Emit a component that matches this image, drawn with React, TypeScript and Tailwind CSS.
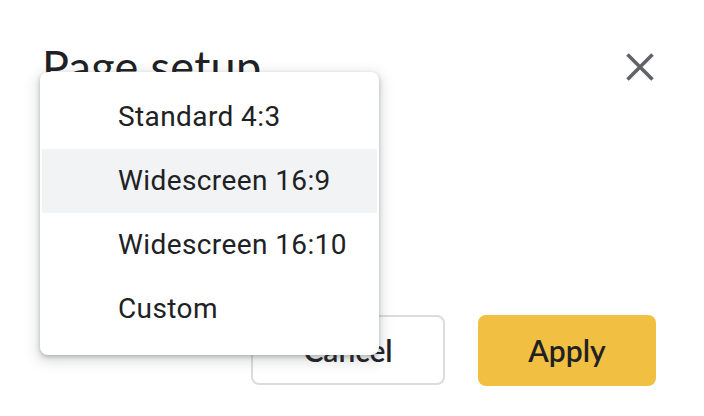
import React from 'react';

const ITEMS = ['Standard 4:3', 'Widescreen 16:9', 'Widescreen 16:10', 'Custom'];

function CloseIcon() {
  return (
    <svg width="28" height="28" viewBox="0 0 28 28" fill="none">
      <path d="M1.5 1.5L26.5 26.5M26.5 1.5L1.5 26.5" stroke="#5f6368" strokeWidth="3.6" strokeLinecap="butt" />
    </svg>
  );
}

export default function App() {
  return (
    <div className="relative w-[704px] h-[416px] bg-white overflow-hidden font-['Lato',sans-serif] text-[#202124]">
      {/* dialog */}
      <div className="flex flex-col h-full">
        <div className="flex items-start justify-between pl-[42px] pr-[50px] pt-[40px]">
          <h2 className="text-[45px] leading-[52px] font-normal tracking-[0.3px]">Page setup</h2>
          <button className="mt-[13px]">
            <CloseIcon />
          </button>
        </div>
        <div className="flex-1" />
        <div className="flex justify-end gap-[33px] pr-[48px] pb-[30px]">
          <button className="w-[194px] h-[70px] rounded-lg border-2 border-[#dadce0] bg-white text-[30px] font-semibold">
            Cancel
          </button>
          <button className="w-[178px] h-[71px] rounded-lg bg-[#f1bf42] text-[30px] font-semibold">
            Apply
          </button>
        </div>
      </div>

      {/* dropdown menu */}
      <div className="absolute left-[40px] top-[72px] w-[339px] rounded-lg bg-white px-[2px] pt-[13px] pb-[14px] shadow-[0_4px_12px_4px_rgba(60,64,67,0.15),0_2px_4px_rgba(60,64,67,0.3)] font-['Roboto',sans-serif]">
        {ITEMS.map((item, i) => (
          <div
            key={item}
            className={`h-[64px] flex items-center pl-[76px] text-[28px] tracking-[0.4px] text-[#202124] ${i === 1 ? 'bg-[#f1f3f4]' : ''}`}
          >
            {item}
          </div>
        ))}
      </div>
    </div>
  );
}
